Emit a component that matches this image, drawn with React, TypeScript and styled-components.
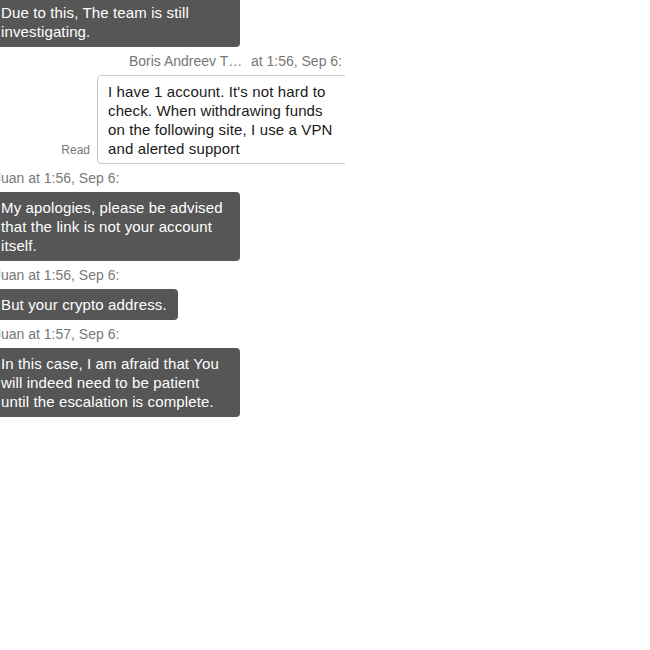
import React from 'react';
import styled, { createGlobalStyle } from 'styled-components';

const GlobalStyle = createGlobalStyle`
  body {
    margin: 0;
    background: #fff;
    font-family: "Liberation Sans", Arial, sans-serif;
  }
`

const Viewport = styled.div`
  width: 345px;
  height: 650px;
  overflow: hidden;
`

const List = styled.div`
  display: flex;
  flex-direction: column;
  width: 360px;
  margin: -3px 0 0 -11px;
`

const Group = styled.div<{ $mine?: boolean }>`
  display: flex;
  flex-direction: column;
  align-items: ${(p) => (p.$mine ? 'flex-end' : 'flex-start')};
  margin-bottom: 6px;
`

const Meta = styled.div<{ $mine?: boolean }>`
  display: flex;
  font-size: 14px;
  line-height: 16px;
  color: #777;
  margin-bottom: 6px;
  padding: ${(p) => (p.$mine ? '0 7px 0 0' : '0 0 0 5px')};
  white-space: nowrap;
`

const Name = styled.span`
  display: inline-block;
  max-width: 115px;
  overflow: hidden;
  text-overflow: ellipsis;
  white-space: nowrap;
  margin-right: 7px;
`

const Row = styled.div`
  display: flex;
  align-items: flex-end;
  gap: 7px;
`

const Status = styled.span`
  font-size: 12px;
  line-height: 16px;
  color: #777;
  margin-bottom: 6px;
`

const Bubble = styled.div<{ $mine?: boolean }>`
  box-sizing: border-box;
  font-size: 15px;
  line-height: 19px;
  letter-spacing: 0.13px;
  border-radius: 4px;
  max-width: ${(p) => (p.$mine ? '252px' : '251px')};
  padding: ${(p) => (p.$mine ? '6px 10px 5px' : '6px 11px 6px 12px')};
  background: ${(p) => (p.$mine ? '#fff' : '#565656')};
  color: ${(p) => (p.$mine ? '#1a1a1a' : '#fff')};
  border: ${(p) => (p.$mine ? '1px solid #c9c9c9' : 'none')};
`

type Msg = {
  mine?: boolean
  name?: string
  time?: string
  text: string
  status?: string
}

const messages: Msg[] = [
  { text: 'Due to this, The team is still investigating.' },
  {
    mine: true,
    name: 'Boris Andreev Tkachenko',
    time: 'at 1:56, Sep 6:',
    text: "I have 1 account. It's not hard to check. When withdrawing funds on the following site, I use a VPN and alerted support",
    status: 'Read',
  },
  { name: 'Juan', time: 'at 1:56, Sep 6:', text: 'My apologies, please be advised that the link is not your account itself.' },
  { name: 'Juan', time: 'at 1:56, Sep 6:', text: 'But your crypto address.' },
  { name: 'Juan', time: 'at 1:57, Sep 6:', text: 'In this case, I am afraid that You will indeed need to be patient until the escalation is complete.' },
]

const App = () => {
  return (
    <Viewport>
      <GlobalStyle />
      <List>
        {messages.map((m, i) => (
          <Group key={i} $mine={m.mine}>
            {m.name && (
              <Meta $mine={m.mine}>
                {m.mine ? (
                  <>
                    <Name>{m.name}</Name>
                    <span>{m.time}</span>
                  </>
                ) : (
                  <span>{m.name} {m.time}</span>
                )}
              </Meta>
            )}
            {m.mine ? (
              <Row>
                {m.status && <Status>{m.status}</Status>}
                <Bubble $mine>{m.text}</Bubble>
              </Row>
            ) : (
              <Bubble>{m.text}</Bubble>
            )}
          </Group>
        ))}
      </List>
    </Viewport>
  );
}

export default App;
